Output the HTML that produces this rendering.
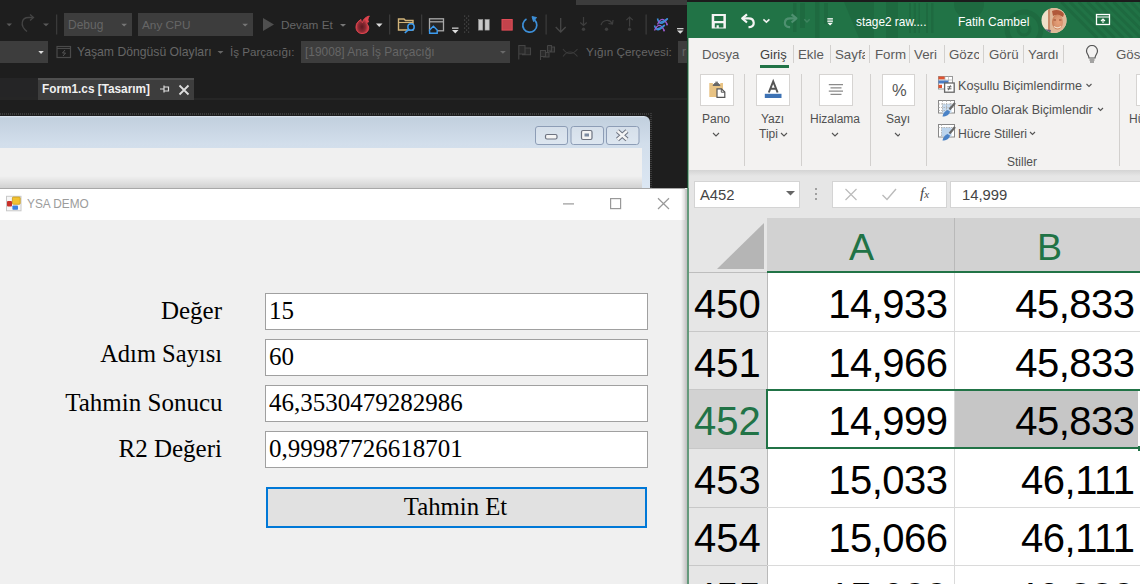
<!DOCTYPE html>
<html><head><meta charset="utf-8">
<style>
*{margin:0;padding:0;box-sizing:border-box}
html,body{width:1140px;height:584px;overflow:hidden;background:#1e1e1e;font-family:"Liberation Sans",sans-serif}
.a{position:absolute}
.vt{color:#666;font-size:12px;white-space:nowrap;line-height:14px}
.combo{background:#3d3d3d}
.serif{font-family:"Liberation Serif",serif;color:#000;white-space:nowrap;font-size:25px;line-height:28px}
.xl{white-space:nowrap}
.tab{color:#5a5a5a;font-size:13.3px;line-height:16px}
.rsep{width:1px;background:#d2d0ce}
.rbox{background:#fff;border:1px solid #d6d4d2}
.rl{color:#505050;font-size:12px;line-height:14px;white-space:nowrap}
.num{font-size:40px;line-height:40px;color:#000;white-space:nowrap}
.hl{height:1px;background:#dadada}
</style></head><body>
<!-- ===== VS dark area ===== -->
<div class="a" style="left:576px;top:0;width:111px;height:5px;background:#3c3c3c"></div>
<div class="a combo" style="left:64px;top:13px;width:68px;height:23px"></div>
<div class="a vt" style="left:68px;top:18px">Debug</div>
<div class="a combo" style="left:138px;top:13px;width:115px;height:23px"></div>
<div class="a vt" style="left:142px;top:18px;font-size:11.8px">Any CPU</div>
<div class="a vt" style="left:281px;top:18px;font-size:11.8px">Devam Et</div>
<svg class="a" style="left:0;top:12px" width="690" height="26">
 <defs><radialGradient id="fl" cx=".45" cy=".62" r=".5"><stop offset="0" stop-color="#5a1820"/><stop offset=".55" stop-color="#8a2a33"/><stop offset="1" stop-color="#e2434e"/></radialGradient></defs>
 <path d="M6.5 11.5 L12 11.5 L9.25 14.2 Z" fill="#5a5a5a"/>
 <path d="M27 19.5 C19 13 22 5.5 28.5 5.5 L33 5.5" stroke="#444" stroke-width="1.3" fill="none"/>
 <path d="M30 2.5 L33.5 5.5 L30 8.5" stroke="#444" stroke-width="1.3" fill="none"/>
 <path d="M43 11.5 L49 11.5 L46 14.2 Z" fill="#5a5a5a"/>
 <rect x="56" y="2.5" width="1.3" height="20" fill="#3a3a3a"/>
 <path d="M121.3 11.8 L127 11.8 L124.15 14.5 Z" fill="#777"/>
 <path d="M242.3 11.8 L248 11.8 L245.15 14.5 Z" fill="#777"/>
 <path d="M263 6 L274 12.5 L263 19 Z" fill="#4f4f4f"/>
 <path d="M340 12 L346 12 L343 14.7 Z" fill="#777"/>
 <path d="M376 11.5 L382.5 11.5 L379.25 15 Z" fill="#ddd"/>
 <rect x="389" y="2.5" width="1.3" height="20" fill="#3a3a3a"/>
 <rect x="421" y="2.5" width="1.3" height="20" fill="#3a3a3a"/>
 <rect x="545.5" y="2.5" width="1.3" height="20" fill="#3a3a3a"/>
 <rect x="645.5" y="2.5" width="1.3" height="20" fill="#3a3a3a"/>
 <!-- flame -->
 <path d="M356 15 C356 11 358.5 9 361 7.5 C361 9.5 361.5 10.5 362.5 10.5 C363 7.5 365.5 5 369.3 4 C367.5 6.5 367.8 8.5 368.5 10 C367 10 366.5 11 367.5 12.5 C368.5 14 369 16 368.5 17.5 C367.5 20.5 365 21.5 362 21.5 C358.5 21.5 356 19 356 15 Z" fill="url(#fl)" stroke="#e0454f" stroke-width="1"/>
 <!-- folder search -->
 <path d="M398.5 7 L404 7 L405.5 8.5 L413 8.5 L413 18 L398.5 18 Z" fill="#2e2a22" stroke="#d2b47a" stroke-width="1.4"/>
 <path d="M398.5 10.5 L413 10.5" stroke="#d2b47a" stroke-width="1"/>
 <circle cx="411" cy="15" r="3.2" fill="#1e1e1e" stroke="#3c9cf0" stroke-width="1.5"/>
 <path d="M408.8 17.3 L404.8 21" stroke="#3c9cf0" stroke-width="1.7"/>
 <!-- window home -->
 <rect x="429.5" y="6.8" width="14" height="12" fill="#262626" stroke="#a8a8a8" stroke-width="1.3"/>
 <path d="M429.5 9.8 L443.5 9.8" stroke="#a8a8a8" stroke-width="1.3"/>
 <path d="M429.6 18 L433.4 14.3 L437.2 18 L437.2 21.3 L429.6 21.3 Z" fill="#1e1e1e" stroke="#3c9cf0" stroke-width="1.4"/>
 <!-- small dropdown -->
 <rect x="452" y="15.5" width="6.5" height="1.3" fill="#ccc"/>
 <path d="M452 18 L458.5 18 L455.25 21.5 Z" fill="#ddd"/>
 <g fill="#4a4a4a"><rect x="464" y="3.5" width="1.2" height="1.2"/><rect x="466" y="5.5" width="1.2" height="1.2"/><rect x="464" y="7.5" width="1.2" height="1.2"/><rect x="466" y="9.5" width="1.2" height="1.2"/><rect x="464" y="11.5" width="1.2" height="1.2"/><rect x="466" y="13.5" width="1.2" height="1.2"/><rect x="464" y="15.5" width="1.2" height="1.2"/><rect x="466" y="17.5" width="1.2" height="1.2"/><rect x="464" y="19.5" width="1.2" height="1.2"/><rect x="468" y="3.5" width="1.2" height="1.2"/><rect x="468" y="7.5" width="1.2" height="1.2"/><rect x="468" y="11.5" width="1.2" height="1.2"/><rect x="468" y="15.5" width="1.2" height="1.2"/><rect x="468" y="19.5" width="1.2" height="1.2"/></g>
 <!-- pause / stop / restart -->
 <rect x="478.6" y="7.5" width="4.2" height="10.6" fill="#c8c8c8" stroke="#9a9a9a" stroke-width=".6"/>
 <rect x="485" y="7.5" width="4.2" height="10.6" fill="#c8c8c8" stroke="#9a9a9a" stroke-width=".6"/>
 <rect x="502" y="7.5" width="10.2" height="10.6" fill="#c3434c" stroke="#e24c57" stroke-width="1"/>
 <path d="M526.5 7 A7 7 0 1 0 534.5 8" fill="none" stroke="#3d8fd8" stroke-width="1.7"/>
 <path d="M532 4.6 L536.5 5.5 L533.5 9.5 Z" fill="#3d8fd8" stroke="#3d8fd8" stroke-width="1"/>
 <!-- step icons -->
 <path d="M560.7 6 L560.7 20 M555.7 15 L560.7 20 L565.7 15" stroke="#474747" stroke-width="1.3" fill="none"/>
 <path d="M583.5 5 L583.5 13.5 M580.3 10.5 L583.5 13.5 L586.7 10.5" stroke="#3e3e3e" stroke-width="1.2" fill="none"/>
 <circle cx="583.5" cy="17.3" r="1.7" fill="#3e3e3e"/>
 <path d="M601 13 C602.5 7.5 610 7 612 11.5 M608.5 11.5 L612.5 12 L613 8" stroke="#3e3e3e" stroke-width="1.2" fill="none"/>
 <circle cx="606.5" cy="17.3" r="1.7" fill="#3e3e3e"/>
 <path d="M629.6 14.5 L629.6 5 M626.4 8.2 L629.6 5 L632.8 8.2" stroke="#3e3e3e" stroke-width="1.2" fill="none"/>
 <circle cx="629.6" cy="17.3" r="1.7" fill="#3e3e3e"/>
 <!-- purple icon -->
 <path d="M657.5 6.5 Q659.5 16 667.7 6.5 M654.5 13.5 Q657 22 664.7 13" stroke="#3d8fd8" stroke-width="1.6" fill="none"/>
 <path d="M657.5 12.5 Q662 2.5 667 12 M654.5 18.5 Q659 8.5 664 18" stroke="#9b59d0" stroke-width="1.4" fill="none"/>
 <path d="M660 10.5 Q664 9.5 667.7 6.5 M657 17 Q661 16.5 664.7 13" stroke="#3d8fd8" stroke-width="1.6" fill="none"/>
 <circle cx="667" cy="12.5" r="1" fill="#9b59d0"/><circle cx="664" cy="18.5" r="1" fill="#9b59d0"/>
 <rect x="677" y="16" width="6.5" height="1.3" fill="#ccc"/>
 <path d="M677 18.5 L683.5 18.5 L680.25 21.7 Z" fill="#ddd"/>
</svg>

<!-- row 2 -->
<div class="a combo" style="left:0;top:41px;width:48px;height:22px"></div>
<div class="a vt" style="left:77px;top:45px;font-size:12.2px">Yaşam Döngüsü Olayları</div>
<div class="a vt" style="left:230px;top:45px;font-size:11.6px">İş Parçacığı:</div>
<div class="a combo" style="left:301px;top:41px;width:209px;height:22px"></div>
<div class="a vt" style="left:305px;top:45px;font-size:11.9px">[19008] Ana İş Parçacığı</div>
<div class="a vt" style="left:586px;top:45px;font-size:11.7px">Yığın Çerçevesi:</div>
<div class="a combo" style="left:678px;top:41px;width:10px;height:22px"></div>
<div class="a vt" style="left:682px;top:45px">r</div>
<svg class="a" style="left:0;top:40px" width="690" height="24">
 <path d="M38.3 11 L43.8 11 L41.05 14 Z" fill="#ddd"/>
 <rect x="57" y="6.5" width="13.5" height="11" fill="none" stroke="#4a4a4a" stroke-width="1.2"/>
 <path d="M57 8.5 L70.5 8.5" stroke="#4a4a4a" stroke-width="1"/>
 <path d="M65 10 L62.5 13 L65.5 13 L63 16" stroke="#555" stroke-width="1" fill="none"/>
 <path d="M217.5 11 L223.5 11 L220.5 13.8 Z" fill="#666"/>
 <path d="M500 11 L505.8 11 L502.9 13.8 Z" fill="#6a6a6a"/>
 <!-- flags -->
 <path d="M518.8 19.5 L518.8 5.5 L525 5.5 L525 14 L518.8 14 M525 8 L530.5 8 L530.5 14.7 L522 14.7" stroke="#444" stroke-width="1.1" fill="#2a2a2a"/>
 <path d="M540.5 20 L540.5 10.5 L545.5 10.5 L545.5 16.5 L540.5 16.5 M545.5 12.5 L549 12.5 L549 17 L543 17" stroke="#444" stroke-width="1.1" fill="#2a2a2a"/>
 <path d="M547.5 5.5 L551.5 5.5 L551.5 11 L547.5 11 M551.5 7 L554.5 7 L554.5 12 L549.5 12 M547.5 5.5 L547.5 13" stroke="#444" stroke-width="1.1" fill="#2a2a2a"/>
 <path d="M563 9 C567 15 573 15 577.5 9 M563 16.5 C567 10.5 573 10.5 577.5 16.5" stroke="#3a3a3a" stroke-width="1.1" fill="none"/>
</svg>

<!-- tab row -->
<div class="a" style="left:0;top:78px;width:38px;height:20px;background:#252526"></div>
<div class="a" style="left:38px;top:78px;width:156px;height:22px;background:#3d3d3d;border-top:2px solid #4f4f4f"></div>
<div class="a" style="left:42px;top:81px;color:#f0f0f0;font-size:12.9px;font-weight:bold;line-height:15px;white-space:nowrap;transform:scaleX(.915);transform-origin:0 0">Form1.cs [Tasarım]</div>
<svg class="a" style="left:155px;top:80px" width="40" height="18">
 <path d="M5 9 L9 9 M9 5.5 L9 12.5 M9 7 L13.5 7 L13.5 11 L9 11" stroke="#ddd" stroke-width="1.2" fill="none"/>
 <path d="M24.5 5.5 L33.5 14.5 M33.5 5.5 L24.5 14.5" stroke="#ddd" stroke-width="1.8"/>
</svg>
<div class="a" style="left:194px;top:98px;width:494px;height:2px;background:#262626"></div><div class="a" style="left:0;top:97px;width:38px;height:3px;background:#262626"></div>

<!-- designer window -->
<div class="a" style="left:0;top:113px;width:652px;height:2px;background:repeating-linear-gradient(90deg,#3a3a3a 0 1px,#1e1e1e 1px 2px)"></div>
<div class="a" style="left:650px;top:113px;width:2px;height:76px;background:repeating-linear-gradient(180deg,#3a3a3a 0 1px,#1e1e1e 1px 2px)"></div>
<div class="a" style="left:0;top:116px;width:650px;height:73px;background:linear-gradient(#dde6f0,#c2d0de 2px,#d2deeb 28px,#dce7f3);border-top-right-radius:6px"></div>
<div class="a" style="left:0;top:148px;width:642px;height:41px;background:#f0f0f0"></div>
<svg class="a" style="left:530px;top:120px" width="115" height="30">
 <g fill="rgba(255,255,255,.25)" stroke="#8d9db6" stroke-width="1">
  <rect x="5.5" y="6.5" width="32" height="18" rx="2.5"/>
  <rect x="41" y="6.5" width="32.5" height="18" rx="2.5"/>
  <rect x="76.5" y="6.5" width="32.5" height="18" rx="2.5"/>
 </g>
 <rect x="15.5" y="14.5" width="11.5" height="4.5" rx="1.5" fill="#f4f4f4" stroke="#6d7380" stroke-width="1.2"/>
 <rect x="51.5" y="10.5" width="10.5" height="9" rx="1.5" fill="#f4f4f4" stroke="#6d7380" stroke-width="1.2"/>
 <rect x="54.5" y="13.5" width="4.5" height="3" fill="#7b8aa0"/>
 <path d="M87.5 11 L97 19.5 M97 11 L87.5 19.5" stroke="#6d7380" stroke-width="4.4"/>
 <path d="M87.5 11 L97 19.5 M97 11 L87.5 19.5" stroke="#f4f4f4" stroke-width="2.4"/>
</svg>

<!-- ===== YSA form ===== -->
<div class="a" style="left:0;top:188px;width:687px;height:396px;background:#f0f0f0"></div>
<div class="a" style="left:0;top:176px;width:642px;height:12px;background:linear-gradient(rgba(0,0,0,0),rgba(0,0,0,.13))"></div>
<div class="a" style="left:0;top:188px;width:685px;height:1px;background:#a8a8a8"></div>
<div class="a" style="left:0;top:189px;width:685px;height:31px;background:#fff"></div>
<div class="a" style="left:681px;top:189px;width:6px;height:395px;background:linear-gradient(90deg,rgba(0,0,0,0),rgba(0,0,0,.2))"></div>
<svg class="a" style="left:5px;top:195px" width="18" height="17">
 <rect x="1.5" y="1.3" width="14.5" height="14.5" fill="#f6f6f6" stroke="#c8c8c8" stroke-width="1"/>
 <rect x="2" y="6" width="5" height="5.5" rx="1" fill="#c8302a"/>
 <rect x="7.4" y="2" width="7.8" height="7.3" rx="1" fill="#f2c230" stroke="#c89a20" stroke-width=".8"/>
 <rect x="7.4" y="10.4" width="5.6" height="4.3" rx=".8" fill="#3a80e0"/>
</svg>
<div class="a" style="left:27px;top:196px;font-size:13.6px;color:#9c9c9c;line-height:15px;white-space:nowrap;transform:scaleX(.87);transform-origin:0 0">YSA DEMO</div>
<svg class="a" style="left:555px;top:195px" width="120" height="18">
 <rect x="8" y="8.3" width="11" height="1.2" fill="#999"/>
 <rect x="55.6" y="3.6" width="10" height="10" fill="none" stroke="#999" stroke-width="1.2"/>
 <path d="M103 3.3 L114 14 M114 3.3 L103 14" stroke="#999" stroke-width="1.2"/>
</svg>

<div class="a serif" style="left:0;top:297px;width:222px;text-align:right">Değer</div>
<div class="a serif" style="left:0;top:339.5px;width:222px;text-align:right;transform:scaleX(.98);transform-origin:221px 0">Adım Sayısı</div>
<div class="a serif" style="left:0;top:388.5px;width:222.5px;text-align:right">Tahmin Sonucu</div>
<div class="a serif" style="left:0;top:434.5px;width:222px;text-align:right">R2 Değeri</div>

<div class="a" style="left:265px;top:293px;width:383px;height:37px;background:#fff;border:1px solid #a0a0a0"></div>
<div class="a" style="left:265px;top:339px;width:383px;height:37px;background:#fff;border:1px solid #a0a0a0"></div>
<div class="a" style="left:265px;top:385px;width:383px;height:37px;background:#fff;border:1px solid #a0a0a0"></div>
<div class="a" style="left:265px;top:431px;width:383px;height:37px;background:#fff;border:1px solid #a0a0a0"></div>
<div class="a serif" style="left:269px;top:297px">15</div>
<div class="a serif" style="left:269px;top:343px">60</div>
<div class="a serif" style="left:269px;top:389px">46,3530479282986</div>
<div class="a serif" style="left:269px;top:435px">0,99987726618701</div>
<div class="a" style="left:266px;top:487px;width:381px;height:41px;background:#e1e1e1;border:2px solid #0078d7"></div>
<div class="a serif" style="left:265px;top:493px;width:381px;text-align:center;transform:scaleX(.99)">Tahmin Et</div>

<!-- ===== Excel ===== -->
<div class="a" style="left:687px;top:0;width:453px;height:584px;background:#f3f2f1"></div>
<div class="a" style="left:687px;top:0;width:1px;height:188px;background:#1d4d33"></div><div class="a" style="left:688px;top:0;width:1px;height:188px;background:#8db59d"></div><div class="a" style="left:687px;top:188px;width:2px;height:396px;background:#64997b"></div>
<div class="a" style="left:687px;top:0;width:453px;height:2px;background:#1c1c1c"></div>
<div class="a" style="left:687px;top:2px;width:453px;height:36px;background:#217346;overflow:hidden">
 <svg width="453" height="36" style="position:absolute;left:0;top:0">
  <g fill="#1e6a40">
   <rect x="106" y="1" width="3.5" height="29"/><rect x="113" y="1" width="5" height="25"/><rect x="128" y="0" width="4.5" height="36"/><rect x="137" y="1" width="4" height="21"/>
   <path d="M157 0 L175 0 L187 36 L172 36 Z"/><rect x="175" y="0" width="12" height="36"/>
   <rect x="199" y="0" width="12" height="36"/>
   <rect x="222" y="1" width="2" height="30"/><rect x="226.7" y="1" width="2.3" height="30"/><rect x="231.5" y="1" width="1.5" height="30"/><rect x="239" y="1" width="2" height="30"/><rect x="244" y="1" width="2.5" height="30"/>
   <circle cx="282" cy="2" r="15"/>
  </g>
  <g stroke="#1e6a40" fill="none">
   <circle cx="337" cy="27" r="17" stroke-width="5"/><circle cx="337" cy="27" r="6" stroke-width="3"/>
   <path d="M374.3 0 L410.3 36 M383.0 0 L419.0 36 M391.7 0 L427.7 36 M400.4 0 L436.4 36 M409.1 0 L445.1 36 M417.8 0 L453.8 36 M426.5 0 L462.5 36 M435.2 0 L471.2 36 M443.9 0 L479.9 36 M452.6 0 L488.6 36 " stroke-width="3"/>
  </g>
 </svg>
</div>
<svg class="a" style="left:687px;top:2px" width="453" height="36">
 <!-- save -->
 <path fill-rule="evenodd" fill="#f4f4f4" d="M24.7 12.1 H38.9 V26.6 H24.7 Z M27.2 14.1 V18.9 H36.4 V14.1 Z M27.8 21.3 V25.6 H29.6 V23.2 H31.8 V25.6 H36.4 V21.3 Z"/>
 <!-- undo -->
 <path d="M56 16.4 H61.5 C68.3 16.4 68.3 25.2 62.5 25.2 H61.5" fill="none" stroke="#f4f4f4" stroke-width="2.2"/>
 <path d="M60 12.3 L55.2 16.4 L60 20.5" fill="none" stroke="#f4f4f4" stroke-width="2.2" stroke-linejoin="round"/>
 <path d="M76.4 17.3 L79.4 20.1 L82.4 17.3" fill="none" stroke="#f0f0f0" stroke-width="1.6"/>
 <!-- redo faded -->
 <path d="M108.6 16.4 H103.1 C96.3 16.4 96.3 25.2 102.1 25.2 H103.1" fill="none" stroke="#4e9070" stroke-width="2.2"/>
 <path d="M104.6 12.3 L109.4 16.4 L104.6 20.5" fill="none" stroke="#4e9070" stroke-width="2.2" stroke-linejoin="round"/>
 <path d="M117.3 17.3 L120 20 L122.7 17.3" fill="none" stroke="#3f8460" stroke-width="1.5"/>
 <!-- customize -->
 <rect x="140.3" y="16.2" width="5.6" height="1.3" fill="#fff"/>
 <rect x="140.3" y="18.5" width="5.6" height="1.3" fill="#fff"/>
 <path d="M140.3 20.8 L145.9 20.8 L143.1 23.5 Z" fill="#fff"/>
 <!-- avatar -->
 <defs><clipPath id="av"><circle cx="367" cy="18.4" r="12.5"/></clipPath><radialGradient id="avg" cx=".6" cy=".5" r=".6"><stop offset="0" stop-color="#e8a078"/><stop offset=".6" stop-color="#d89470"/><stop offset="1" stop-color="#c87850"/></radialGradient></defs>
 <g clip-path="url(#av)">
 <rect x="354" y="5" width="26" height="27" fill="#eee0c8"/>
 <rect x="361" y="5" width="2.5" height="27" fill="#c88a68"/>
 <path d="M364 6 L381 6 L381 32 L364 32 Z" fill="#e0b898"/>
 <path d="M365 9 C369 7 375 8 377 12 L376 15 C373 13 369 12 366 14 Z" fill="#b0583a"/>
 <ellipse cx="370.5" cy="20" rx="5.5" ry="7.5" fill="url(#avg)"/>
 <path d="M366.5 18 L369 18 M372 18 L374.5 18" stroke="#9a4a30" stroke-width="1.2"/>
 <path d="M367 24.5 C369 26 372 26 374 24.5" stroke="#f4e0cc" stroke-width="1.2" fill="none"/>
 <path d="M356 27 L364 28 L363 32 L355 32 Z" fill="#5e5878"/>
 </g>
 <!-- ribbon display -->
 <rect x="409.5" y="12.5" width="13" height="10" fill="none" stroke="#fff" stroke-width="1.3"/>
 <rect x="409.5" y="14.5" width="13" height="1" fill="#fff"/>
 <path d="M416 21 L416 17 M414 19 L416 17 L418 19" stroke="#fff" stroke-width="1.1" fill="none"/>
</svg>
<div class="a xl" style="left:856px;top:15px;font-size:11.85px;color:#fff;line-height:14px">stage2 raw....</div>
<div class="a xl" style="left:958px;top:15px;font-size:12px;color:#fff;line-height:14px">Fatih Cambel</div>

<!-- ribbon tabs -->
<div class="a tab" style="left:702px;top:47px;font-size:13.2px">Dosya</div>
<div class="a tab" style="left:760px;top:47px;font-size:13px;color:#404040">Giriş</div>
<div class="a" style="left:760px;top:65px;width:29px;height:3px;background:#217346"></div>
<div class="a rsep" style="left:793px;top:45px;height:18px"></div>
<div class="a tab" style="left:798px;top:47px">Ekle</div>
<div class="a rsep" style="left:830px;top:45px;height:18px"></div>
<div class="a" style="left:835px;top:40px;width:30px;height:24px;overflow:hidden"><div class="tab" style="position:absolute;left:0;top:7px;white-space:nowrap">Sayfa</div></div>
<div class="a rsep" style="left:869px;top:45px;height:18px"></div>
<div class="a tab" style="left:875px;top:47px">Form</div>
<div class="a rsep" style="left:909px;top:45px;height:18px"></div>
<div class="a tab" style="left:914px;top:47px">Veri</div>
<div class="a rsep" style="left:944px;top:45px;height:18px"></div>
<div class="a" style="left:949px;top:40px;width:30px;height:24px;overflow:hidden"><div class="tab" style="position:absolute;left:0;top:7px;white-space:nowrap">Gözc</div></div>
<div class="a rsep" style="left:983px;top:45px;height:18px"></div>
<div class="a tab" style="left:989px;top:47px">Görü</div>
<div class="a rsep" style="left:1023px;top:45px;height:18px"></div>
<div class="a tab" style="left:1028px;top:47px">Yardı</div>
<div class="a rsep" style="left:1063px;top:45px;height:18px"></div>
<svg class="a" style="left:1084px;top:45px" width="16" height="20">
 <path d="M5 13 C5 10 2.5 9 2.5 6 A5.5 5.5 0 0 1 13.5 6 C13.5 9 11 10 11 13 Z" fill="none" stroke="#555" stroke-width="1.2"/>
 <path d="M5.5 15 L10.5 15 M6 17 L10 17" stroke="#555" stroke-width="1.2"/>
</svg>
<div class="a tab" style="left:1116px;top:47px">Göster</div>

<!-- ribbon body -->
<div class="a rbox" style="left:700px;top:74px;width:34px;height:32px"></div>
<svg class="a" style="left:700px;top:74px" width="34" height="32">
 <path d="M9.3 9 L12.5 9 L14 11.2 L19 11.2 L20.7 9 L23 9 L23 23 L9.3 23 Z" fill="#e8c384"/>
 <path d="M13 11.5 L14.5 9.5 L18.5 9.5 L20 11.5 Z" fill="#666" stroke="#666" stroke-width="1"/>
 <rect x="15.3" y="7.6" width="2.6" height="1.6" fill="#777"/>
 <path d="M17 14.8 L21.5 14.8 L24.8 18 L24.8 23.4 L17 23.4 Z" fill="#fff" stroke="#555" stroke-width="1.2"/>
 <path d="M21.3 14.8 L21.3 18.2 L24.8 18.2" fill="none" stroke="#555" stroke-width="1"/>
</svg>
<div class="a rl" style="left:702px;top:112px">Pano</div>
<div class="a rsep" style="left:744px;top:74px;height:92px"></div>
<div class="a rbox" style="left:756px;top:74px;width:34px;height:32px"></div>
<svg class="a" style="left:756px;top:74px" width="34" height="32">
 <path d="M12.8 18.5 L17.2 7.5 L21.6 18.5 M14.4 14.8 L20 14.8" fill="none" stroke="#555" stroke-width="2"/>
 <rect x="8.8" y="19.8" width="16.7" height="4.2" fill="#3d72b4"/>
</svg>
<div class="a rl" style="left:761px;top:112px">Yazı</div>
<div class="a rl" style="left:759px;top:127px">Tipi</div>
<div class="a rsep" style="left:801px;top:74px;height:92px"></div>
<div class="a rbox" style="left:819px;top:74px;width:34px;height:32px"></div>
<svg class="a" style="left:819px;top:74px" width="34" height="32">
 <path d="M9.8 10.7 L24 10.7 M11.5 13.9 L22.5 13.9 M9.8 17.1 L24 17.1 M11.5 20.4 L22.5 20.4" stroke="#8a8a8a" stroke-width="1.3"/>
</svg>
<div class="a rl" style="left:810px;top:112px">Hizalama</div>
<div class="a rsep" style="left:870px;top:74px;height:92px"></div>
<div class="a rbox" style="left:882px;top:74px;width:33px;height:32px"></div>
<div class="a" style="left:892px;top:81px;font-size:16.5px;color:#555;line-height:18px">%</div>
<div class="a rl" style="left:886px;top:112px">Sayı</div>
<div class="a rsep" style="left:926px;top:74px;height:92px"></div>
<svg class="a" style="left:700px;top:128px" width="200" height="12">
 <path d="M13 5 L16 8 L19 5 M81 5 L84 8 L87 5 M132 5 L135 8 L138 5 M195 5 L198 8 L201 5" fill="none" stroke="#555" stroke-width="1.1"/>
</svg>

<!-- styles group -->
<svg class="a" style="left:937px;top:75px" width="20" height="68">
 <rect x="1.5" y="1.5" width="14" height="12.5" fill="#fff" stroke="#999" stroke-width="1"/>
 <rect x="1.5" y="1.5" width="6.5" height="3" fill="#e0532f"/>
 <path d="M8 1.5 L8 14 M11.5 1.5 L11.5 6 M1.5 5 L15.5 5" stroke="#bbb" stroke-width=".8"/>
 <rect x="1.5" y="5.5" width="10" height="3" fill="#4a7cc4"/>
 <rect x="1.5" y="9.8" width="3.5" height="3.2" fill="#e0532f"/>
 <rect x="7.6" y="8" width="9.6" height="9.2" fill="#fff" stroke="#666" stroke-width="1.3"/>
 <path d="M10.3 11.8 L14.5 11.8 M10.3 13.8 L14.5 13.8 M13.5 10.3 L11.3 15.3" stroke="#444" stroke-width=".8"/>
 <rect x="1.5" y="25.5" width="16" height="12.5" fill="#fff" stroke="#888" stroke-width="1"/>
 <rect x="5.5" y="29" width="9" height="9" fill="#c8dcf0"/>
 <path d="M1.5 29 L17.5 29 M1.5 32.5 L17.5 32.5 M1.5 35.5 L12 35.5 M5.5 25.5 L5.5 38 M9.5 25.5 L9.5 38 M13.5 25.5 L13.5 33" stroke="#aaa" stroke-width=".8" stroke-dasharray="1.5 1"/>
 <path d="M18 28 L12.5 34.5" stroke="#666" stroke-width="2.2"/>
 <path d="M5.5 41.5 C6 38.5 8 36 10.5 35 L13 36.5 C12.5 39.5 9.5 41.5 5.5 41.5 Z" fill="#4a82c6"/>
 <rect x="1.5" y="49.5" width="16" height="12.5" fill="#fff" stroke="#888" stroke-width="1"/>
 <rect x="4.5" y="52.5" width="10" height="9" fill="#bcd4ec"/>
 <path d="M1.5 52.5 L17.5 52.5 M4.5 49.5 L4.5 62" stroke="#aaa" stroke-width=".8" stroke-dasharray="1.5 1"/>
 <path d="M18 52 L12.5 58.5" stroke="#666" stroke-width="2.2"/>
 <path d="M5.5 65.5 C6 62.5 8 60 10.5 59 L13 60.5 C12.5 63.5 9.5 65.5 5.5 65.5 Z" fill="#4a82c6"/>
</svg>
<div class="a rl" style="left:958px;top:79px;font-size:12.6px;color:#505050">Koşullu Biçimlendirme</div>
<div class="a rl" style="left:958px;top:103px;font-size:12.5px;color:#505050">Tablo Olarak Biçimlendir</div>
<div class="a rl" style="left:958px;top:127px;font-size:12.2px;color:#505050">Hücre Stilleri</div>
<svg class="a" style="left:1080px;top:80px" width="30" height="60">
 <path d="M6.5 4 L9 6.5 L11.5 4 M18 28 L20.5 30.5 L23 28" fill="none" stroke="#555" stroke-width="1.1"/>
</svg>
<svg class="a" style="left:1028px;top:128px" width="12" height="12">
 <path d="M2 4 L4.5 6.5 L7 4" fill="none" stroke="#555" stroke-width="1.1"/>
</svg>
<div class="a rl" style="left:1007px;top:155px">Stiller</div>
<div class="a rsep" style="left:1119px;top:74px;height:92px"></div>
<div class="a rbox" style="left:1136px;top:74px;width:10px;height:32px"></div>
<div class="a rl" style="left:1129px;top:112px">Hücre</div>

<!-- formula area -->
<div class="a" style="left:689px;top:170px;width:451px;height:48px;background:linear-gradient(#d4d4d4,#e6e6e6 6px,#e6e6e6)"></div>
<div class="a" style="left:694px;top:181px;width:106px;height:27px;background:#fff;border:1px solid #d4d4d4"></div>
<div class="a xl" style="left:700px;top:187px;font-size:14.8px;color:#444;line-height:17px">A452</div>
<svg class="a" style="left:785px;top:190px" width="12" height="8"><path d="M1 1 L10 1 L5.5 5.5 Z" fill="#666"/></svg>
<svg class="a" style="left:813px;top:186px" width="6" height="16"><circle cx="3" cy="3" r="1" fill="#888"/><circle cx="3" cy="8" r="1" fill="#888"/><circle cx="3" cy="13" r="1" fill="#888"/></svg>
<div class="a" style="left:832px;top:181px;width:115px;height:27px;background:#fff;border:1px solid #d4d4d4"></div>
<svg class="a" style="left:832px;top:181px" width="115" height="27">
 <path d="M13.5 8 L24.5 19 M24.5 8 L13.5 19" stroke="#bbb" stroke-width="1.2"/>
 <path d="M50.5 14 L55 18.5 L64 8" stroke="#bbb" stroke-width="1.4" fill="none"/>
</svg>
<div class="a" style="left:920px;top:184px;font-family:'Liberation Serif',serif;font-style:italic;font-size:15px;color:#444;line-height:18px">f<span style="font-size:11px">x</span></div>
<div class="a" style="left:950px;top:181px;width:192px;height:27px;background:#fff;border:1px solid #d4d4d4"></div>
<div class="a xl" style="left:962px;top:187px;font-size:14.8px;color:#444;line-height:17px">14,999</div>

<!-- grid -->
<div class="a" style="left:689px;top:218px;width:451px;height:366px;background:#fff"></div>
<div class="a" style="left:689px;top:218px;width:78px;height:55px;background:#e6e6e6"></div>
<svg class="a" style="left:689px;top:218px" width="80" height="56"><path d="M28 51 L75 51 L75 5 Z" fill="#b5b5b5"/></svg>
<div class="a" style="left:767px;top:218px;width:373px;height:53px;background:#d2d2d2"></div>
<div class="a" style="left:954px;top:218px;width:1px;height:53px;background:#b9b9b9"></div>
<div class="a" style="left:767px;top:271px;width:373px;height:2px;background:#217346"></div>
<div class="a" style="left:689px;top:272px;width:78px;height:1px;background:#bdbdbd"></div>
<div class="a xl" style="left:849px;top:227px;font-size:37.6px;line-height:40px;color:#217346">A</div>
<div class="a xl" style="left:1037px;top:227px;font-size:37.6px;line-height:40px;color:#217346">B</div>

<div class="a" style="left:689px;top:273px;width:78px;height:311px;background:#e6e6e6"></div>
<div class="a" style="left:689px;top:390px;width:78px;height:58px;background:#d2d2d2"></div>
<div class="a" style="left:766.5px;top:273px;width:1.5px;height:311px;background:#b9b9b9"></div>
<div class="a" style="left:954px;top:273px;width:1px;height:311px;background:#dadada"></div>
<div class="a" style="left:955px;top:390px;width:183px;height:58px;background:#c6c6c6"></div>
<!-- row lines -->
<div class="a" style="left:689px;top:331px;width:78px;height:1px;background:#c8c8c8"></div>
<div class="a hl" style="left:767px;top:331px;width:373px"></div>
<div class="a" style="left:689px;top:389px;width:78px;height:1px;background:#c8c8c8"></div>
<div class="a" style="left:689px;top:448px;width:78px;height:1px;background:#c8c8c8"></div>
<div class="a" style="left:689px;top:507px;width:78px;height:1px;background:#c8c8c8"></div>
<div class="a hl" style="left:767px;top:507px;width:373px"></div>
<div class="a" style="left:689px;top:565px;width:78px;height:1px;background:#c8c8c8"></div>
<div class="a hl" style="left:767px;top:565px;width:373px"></div>
<!-- selection -->
<div class="a" style="left:766px;top:389px;width:374px;height:60px;border:2px solid #217346;border-right:none"></div>
<div class="a" style="left:1138px;top:446px;width:3px;height:5px;background:#217346"></div>

<!-- row numbers -->
<div class="a num" style="left:694px;top:284px">450</div>
<div class="a num" style="left:694px;top:343px">451</div>
<div class="a num" style="left:694px;top:401px;color:#217346">452</div>
<div class="a num" style="left:694px;top:460px">453</div>
<div class="a num" style="left:694px;top:518px">454</div>
<div class="a num" style="left:694px;top:577px">455</div>
<!-- values A -->
<div class="a num" style="left:767px;top:284px;width:180.5px;text-align:right;letter-spacing:-.5px">14,933</div>
<div class="a num" style="left:767px;top:343px;width:180.5px;text-align:right;letter-spacing:-.5px">14,966</div>
<div class="a num" style="left:767px;top:401px;width:180.5px;text-align:right;letter-spacing:-.5px">14,999</div>
<div class="a num" style="left:767px;top:460px;width:180.5px;text-align:right;letter-spacing:-.5px">15,033</div>
<div class="a num" style="left:767px;top:518px;width:180.5px;text-align:right;letter-spacing:-.5px">15,066</div>
<div class="a num" style="left:767px;top:577px;width:180.5px;text-align:right;letter-spacing:-.5px">15,099</div>
<!-- values B -->
<div class="a num" style="left:955px;top:284px;width:179.5px;text-align:right;letter-spacing:-.5px">45,833</div>
<div class="a num" style="left:955px;top:343px;width:179.5px;text-align:right;letter-spacing:-.5px">45,833</div>
<div class="a num" style="left:955px;top:401px;width:179.5px;text-align:right;letter-spacing:-.5px">45,833</div>
<div class="a num" style="left:955px;top:460px;width:179.5px;text-align:right;letter-spacing:-.5px">46,111</div>
<div class="a num" style="left:955px;top:518px;width:179.5px;text-align:right;letter-spacing:-.5px">46,111</div>
<div class="a num" style="left:955px;top:577px;width:179.5px;text-align:right;letter-spacing:-.5px">46,389</div>
</body></html>
